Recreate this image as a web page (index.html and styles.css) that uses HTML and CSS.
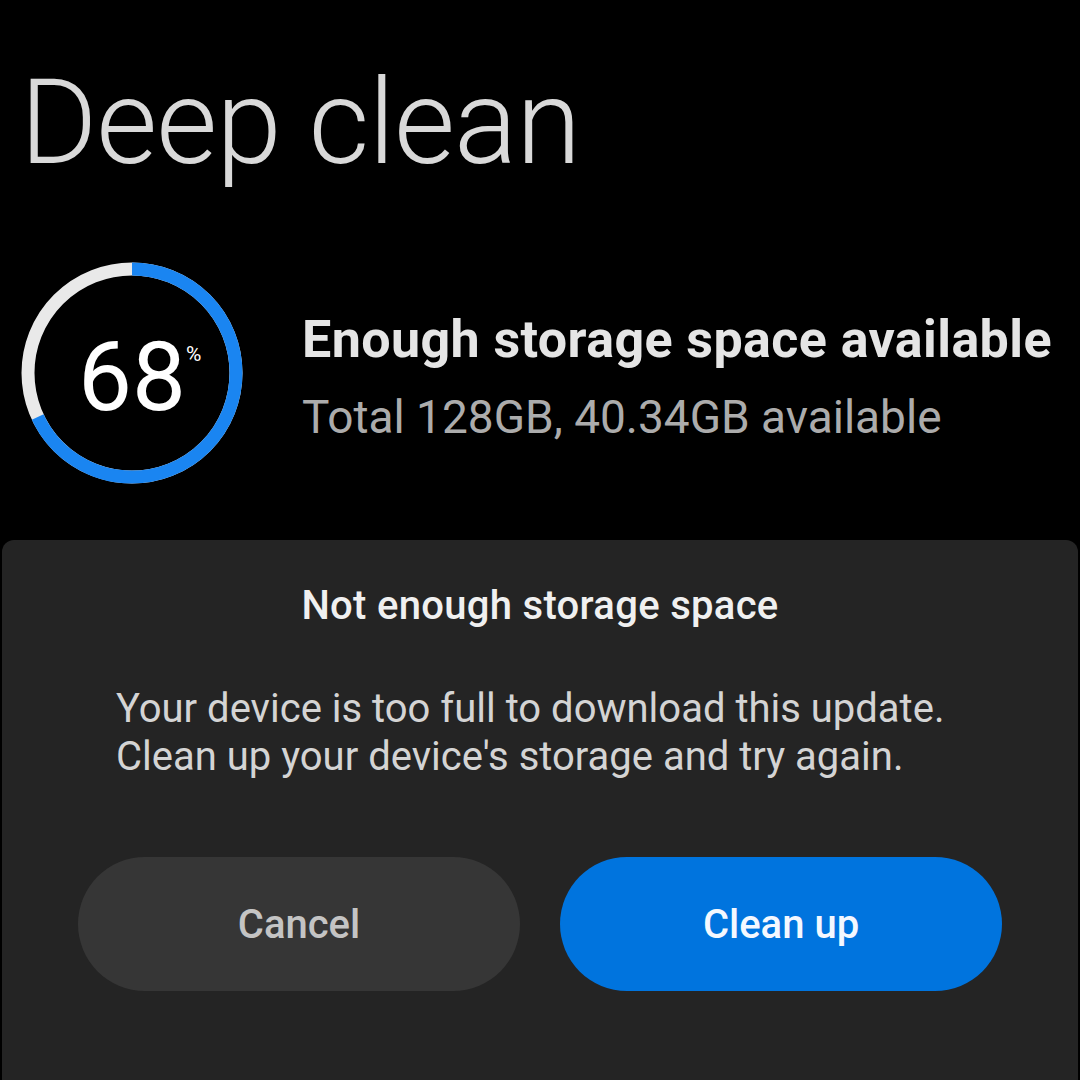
FILE: index.html
```html
<!DOCTYPE html>
<html>
<head>
<meta charset="utf-8">
<link rel="stylesheet" href="styles.css">
</head>
<body>
<div class="screen">
  <h1 class="title">Deep clean</h1>
  <div class="storage">
    <div class="ring">
      <svg width="230" height="230" viewBox="0 0 230 230">
        <circle cx="115" cy="115" r="104" fill="none" stroke="#e9e9e9" stroke-width="13"/>
        <circle cx="115" cy="115" r="104" fill="none" stroke="#1a85f1" stroke-width="13"
          stroke-dasharray="444.3 1000" transform="rotate(-90 115 115)"/>
      </svg>
      <div class="pct"><span class="num">68<span class="sign">%</span></span></div>
    </div>
    <div class="info">
      <div class="headline">Enough storage space available</div>
      <div class="sub">Total 128GB, 40.34GB available</div>
    </div>
  </div>
  <div class="dialog">
    <div class="dlg-title">Not enough storage space</div>
    <div class="dlg-body">Your device is too full to download this update.<br>Clean up your device's storage and try again.</div>
    <div class="buttons">
      <div class="btn cancel">Cancel</div>
      <div class="btn primary">Clean up</div>
    </div>
  </div>
</div>
</body>
</html>
```
FILE: styles.css
```css
html, body {
  margin: 0;
  padding: 0;
  background: #000;
}
.screen {
  width: 1080px;
  height: 1080px;
  display: flex;
  flex-direction: column;
  font-family: Roboto, "Noto Sans", sans-serif;
  overflow: hidden;
}
.title {
  margin: 0;
  padding: 64px 0 0 20px;
  height: 150px;
  box-sizing: border-box;
  font-weight: 300;
  font-size: 118px;
  line-height: 1;
  color: #d9d9d9;
  letter-spacing: -1px;
}
.storage {
  display: flex;
  align-items: center;
  padding: 108px 0 0 17px;
  gap: 55px;
}
.ring {
  position: relative;
  width: 230px;
  height: 230px;
  flex: none;
}
.ring svg {
  display: block;
}
.pct {
  position: absolute;
  left: 0;
  top: 0;
  width: 230px;
  height: 230px;
  display: flex;
  justify-content: center;
  align-items: center;
  color: #fff;
}
.num {
  position: relative;
  font-size: 96px;
  line-height: 112px;
  font-weight: 400;
  margin-top: 8px;
}
.sign {
  position: absolute;
  left: 108px;
  top: 21px;
  font-size: 21px;
  line-height: normal;
}
.info {
  display: flex;
  flex-direction: column;
  gap: 19px;
  margin-top: 8px;
}
.headline {
  font-size: 52px;
  line-height: 60px;
  font-weight: 700;
  color: #e5e5e5;
  letter-spacing: 0.4px;
  white-space: nowrap;
}
.sub {
  font-size: 46px;
  line-height: 56px;
  color: #acacac;
  white-space: nowrap;
}
.dialog {
  margin: 52px 2px 0;
  flex: 1;
  background: #242424;
  border-radius: 12px 12px 0 0;
  display: flex;
  flex-direction: column;
}
.dlg-title {
  text-align: center;
  padding-top: 42px;
  font-size: 40px;
  line-height: 48px;
  font-weight: 500;
  color: #f0f0f0;
  letter-spacing: 0.3px;
}
.dlg-body {
  padding: 55px 0 0 114px;
  font-size: 40px;
  line-height: 48px;
  color: #d4d4d4;
}
.buttons {
  display: flex;
  gap: 40px;
  padding: 76px 0 0 76px;
}
.btn {
  width: 442px;
  height: 134px;
  border-radius: 67px;
  display: flex;
  justify-content: center;
  align-items: center;
  font-size: 40px;
  font-weight: 500;
}
.cancel {
  background: #363636;
  color: #c4c4c4;
}
.primary {
  background: #0074de;
  color: #f4f8ff;
}
```
